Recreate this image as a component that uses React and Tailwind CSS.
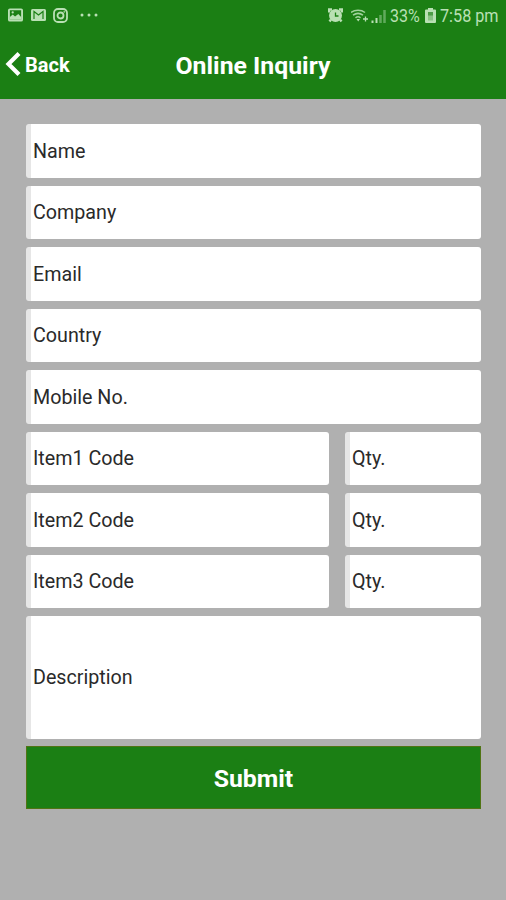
import React from 'react';

const contactFields = ['Name', 'Company', 'Email', 'Country', 'Mobile No.'];
const itemFields = ['Item1 Code', 'Item2 Code', 'Item3 Code'];

const Field = ({ label, className = 'h-[53.5px]' }) => (
    <label
        className={`flex items-center rounded-[3px] border-l-[5px] border-[#e6e6e6] bg-white pl-[2px] pt-[2px] text-[19.7px] leading-6 text-[#2a2a2a] ${className}`}
    >
        <span>{label}</span>
    </label>
);

const StatusBar = () => (
    <div className="flex h-8 items-center justify-between pl-2 pr-2 text-[#b9e0b4]">
        <div className="flex items-center pb-[2px]">
            <svg className="h-[14px] w-[15px]" viewBox="0 0 16 14" fill="none" stroke="currentColor">
                <rect x="1" y="1" width="14" height="12" rx="1" strokeWidth="2" />
                <path d="M2 11.5V9l3-2.5 2.5 2L11 6l3 3v3H2z" fill="currentColor" stroke="none" />
                <circle cx="5" cy="4.3" r="1.2" fill="currentColor" stroke="none" />
            </svg>
            <svg className="ml-[8px] h-3 w-[15px]" viewBox="0 0 15 12" fill="none" stroke="currentColor">
                <rect width="15" height="12" rx="1.5" fill="currentColor" stroke="none" />
                <path d="M3 10V2.500l4.500 3.500 4.500-3.500V10" stroke="#1b7f14" strokeWidth="1.2" />
            </svg>
            <svg className="ml-[7px] h-[15px] w-[15px]" viewBox="0 0 15 15" fill="none" stroke="currentColor" strokeWidth="1.8">
                <rect x="1" y="1" width="13" height="13" rx="4" />
                <circle cx="7.5" cy="7.5" r="3" />
                <circle cx="11.3" cy="3.8" r=".5" strokeWidth="1" />
            </svg>
            <svg className="ml-3 h-1 w-[18px]" viewBox="0 0 18 4" fill="currentColor">
                <circle cx="2" cy="2" r="1.5" />
                <circle cx="9" cy="2" r="1.5" />
                <circle cx="16" cy="2" r="1.5" />
            </svg>
        </div>

        <div className="flex items-center">
            <svg className="mb-[2px] h-[15px] w-[15px]" viewBox="0 0 15 15" fill="none" stroke="currentColor">
                <circle cx="7.5" cy="7.5" r="6.5" fill="currentColor" stroke="none" />
                <path d="M1 4.500V1.500h3M11 1.500h3v3M3 11.500l-1.500 2M12 11.500l1.500 2" strokeWidth="2.400" />
                <path d="M7.500 4.500v3.500h3" stroke="#1b7f14" strokeWidth="1.300" />
            </svg>
            {/* Wifi with the plus mark, then the mobile signal */}
            <svg className="ml-2 h-[15px] w-9" viewBox="0 0 36 15" fill="none" stroke="currentColor">
                <path d="M0 3.500c3.800-3 10.200-3 14 0M2 6.200c3-2.200 7-2.200 10 0M4.500 8.800c1.700-1.300 3.300-1.300 5 0" strokeWidth="1.500" opacity=".85" />
                <path d="M5.500 10h3.500l-1.800 2.500z" fill="currentColor" stroke="none" />
                <path d="M12 10h5M14.500 7.500v5" strokeWidth="1.300" />
                <path d="M21.500 11.500v2.500M25.500 9v5" strokeWidth="2" />
                <path d="M29.500 6v8M33.500 1v13" strokeWidth="2.500" opacity=".45" />
            </svg>
            <span className="ml-[3px] w-[31px] origin-left scale-x-[.89] whitespace-nowrap text-[18px] leading-5">33%</span>
            <svg className="mb-[2px] ml-1 h-[15px] w-[11px]" viewBox="0 0 11 15" fill="none">
                <path d="M3 0h5v1.500h2a1 1 0 0 1 1 1V14a1 1 0 0 1-1 1H1a1 1 0 0 1-1-1V2.500a1 1 0 0 1 1-1h2z" fill="currentColor" />
                <path d="M3 4h5v8.500H3z" fill="#1b7f14" opacity=".3" />
                <path d="M3 4h5v3.500H3z" fill="#1b7f14" opacity=".55" />
            </svg>
            <span className="ml-1 w-[58px] origin-left scale-x-[.9] whitespace-nowrap text-[18px] leading-5">7:58 pm</span>
        </div>
    </div>
);

const Header = () => (
    <header className="h-[99px] bg-[#1b7f14]">
        <StatusBar />
        <div className="grid h-[67px] grid-cols-[1fr_auto_1fr] items-center text-white">
            <button className="flex items-center pl-[5px] text-[20px] font-bold leading-6">
                <svg className="mb-[3px] h-6 w-[16px]" viewBox="0 0 16 24" fill="none" stroke="currentColor" strokeWidth="4.2">
                    <path d="M14 1.500L3.500 12l10.500 10.500" />
                </svg>
                <span className="mb-[2px] ml-[4px]">Back</span>
            </button>
            <h1 className="text-[24.8px] font-bold leading-7">Online Inquiry</h1>
            <span />
        </div>
    </header>
);

const App = () => {
    return (
        <div className="min-h-screen bg-[#b0b0b0] font-['Roboto',sans-serif]">
            <Header />
            <form className="ml-[26px] mr-[25px] flex flex-col gap-2 pt-[25px]">
                {contactFields.map((label) => (
                    <Field key={label} label={label} />
                ))}
                {itemFields.map((label) => (
                    <div key={label} className="grid grid-cols-[303px_1fr] gap-4">
                        <Field label={label} />
                        <Field label="Qty." />
                    </div>
                ))}
                <Field label="Description" className="h-[122.5px]" />
                <button
                    type="button"
                    className="-mt-[0.5px] h-[63px] border border-[#507414] bg-[#1b7f14] pt-[2px] text-[24.8px] font-bold leading-7 text-white"
                >
                    Submit
                </button>
            </form>
        </div>
    );
};

export default App;
